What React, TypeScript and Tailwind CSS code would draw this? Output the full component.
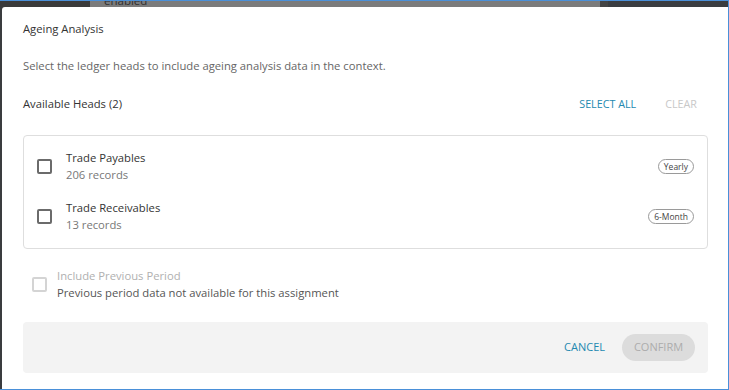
import React from "react";

const heads = [
  { name: "Trade Payables", records: 206, period: "Yearly" },
  { name: "Trade Receivables", records: 13, period: "6-Month" },
];

function Box({ disabled }: { disabled?: boolean }) {
  return (
    <span
      className={
        disabled
          ? "block w-[15px] h-[15px] rounded-[2px] border-2 border-[#d4d4d4] shrink-0"
          : "block w-[15px] h-[15px] rounded-[2px] border-2 border-[#6b6b6b] shrink-0"
      }
    />
  );
}

export default function App() {
  return (
    <div className="w-[729px] h-[390px] overflow-hidden bg-[#3a3c3f] border-t border-r border-b border-[#4a90d9] font-['Open_Sans',sans-serif] flex flex-col">
      {/* backdrop strip behind the dialog */}
      <div className="h-[6px] flex shrink-0 overflow-hidden">
        <div className="w-[90px] bg-[#3a3a3a]" />
        <div className="flex-1 bg-[#7b7b7b] pl-[14px]">
          <span className="block text-[11.5px] leading-[14px] -mt-[7px] text-[#2e2e2e]">enabled</span>
        </div>
        <div className="w-[8px] bg-[#444]" />
        <div className="w-[120px] bg-[#3a3d40]" />
      </div>

      {/* dialog */}
      <div className="flex-1 ml-[2px] bg-white rounded-tl-[3px] pl-[21px] pr-5 pt-[13px] text-[11.25px] text-[#333]">
        <h2 className="leading-[18px]">Ageing Analysis</h2>
        <p className="mt-[19px] leading-[18px] text-[#666]">
          Select the ledger heads to include ageing analysis data in the context.
        </p>

        <div className="mt-[20px] flex items-center h-[18px]">
          <span className="flex-1">Available Heads (2)</span>
          <button className="text-[10.75px] text-[#2389b0] uppercase">Select All</button>
          <button className="ml-[29px] mr-[11px] text-[10.75px] text-[#c8c8c8] uppercase">Clear</button>
        </div>

        <div className="mt-[22px] border border-[#dedede] rounded-[4px] pl-[13px] pr-[13px] pt-[5px] pb-[7px]">
          {heads.map((h) => (
            <div key={h.name} className="flex items-center py-2">
              <Box />
              <div className="ml-[14px] flex-1">
                <div className="leading-[17px] text-[#333]">{h.name}</div>
                <div className="leading-[17px] text-[#777]">{h.records} records</div>
              </div>
              <span className="px-[5px] h-[15px] leading-[13px] rounded-full border border-[#9a9a9a] text-[8.5px] text-[#444]">
                {h.period}
              </span>
            </div>
          ))}
        </div>

        <div className="mt-[18px] flex items-center pl-[9px]">
          <Box disabled />
          <div className="ml-[10px]">
            <div className="leading-[17px] text-[#b0b0b0]">Include Previous Period</div>
            <div className="leading-[17px] text-[#555]">Previous period data not available for this assignment</div>
          </div>
        </div>

        <div className="mt-[21px] h-[51px] bg-[#f3f3f3] rounded-[4px] flex items-center justify-end pr-[13px]">
          <button className="text-[11px] text-[#2389b0] uppercase">Cancel</button>
          <button className="ml-[17px] w-[73px] h-[27px] rounded-full bg-[#dcdcdc] text-[11px] text-[#acacac] uppercase">
            Confirm
          </button>
        </div>
      </div>
    </div>
  );
}
